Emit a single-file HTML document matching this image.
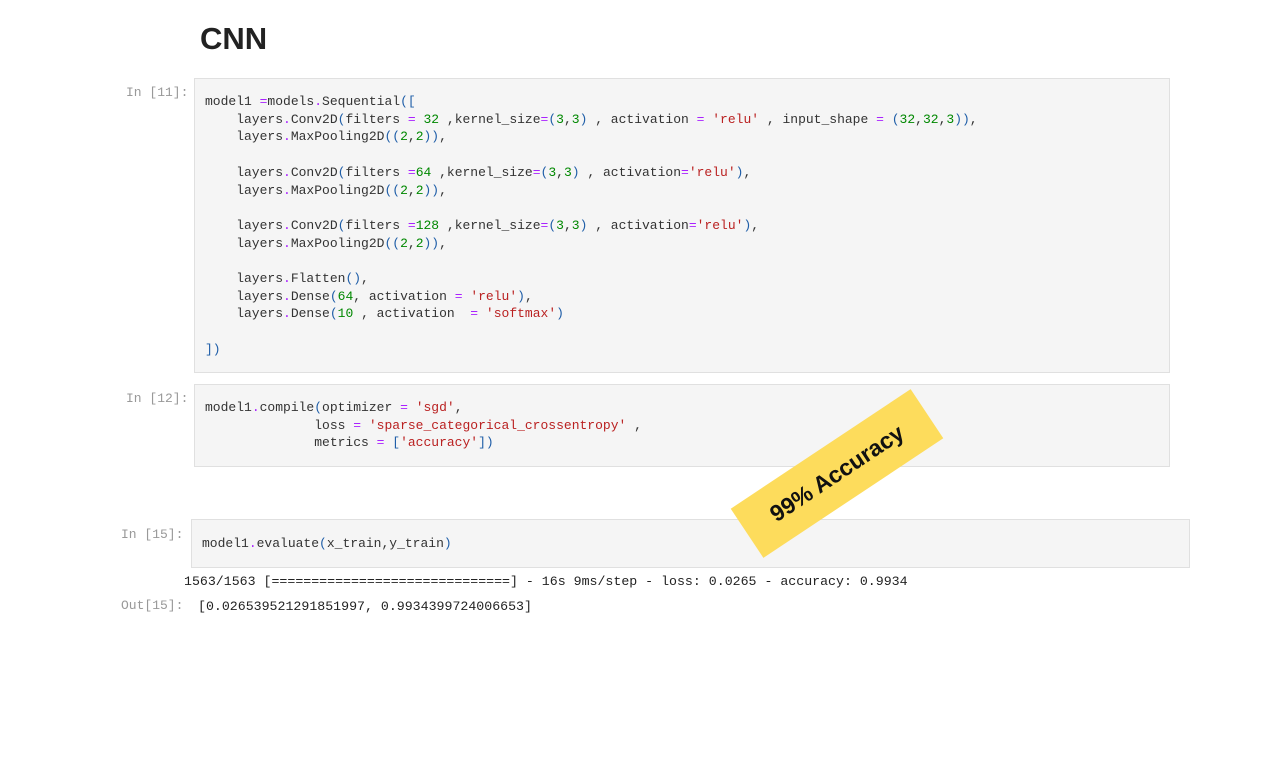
<!DOCTYPE html>
<html><head><meta charset="utf-8"><style>
body{margin:0;width:1280px;height:769px;background:#fff;position:relative;overflow:hidden;font-family:"Liberation Sans",sans-serif}
.t{position:absolute;left:200px;top:21px;font-size:31px;font-weight:bold;color:#222}
.p{position:absolute;font-family:"Liberation Mono",monospace;font-size:13px;color:#999;white-space:pre}
.c{position:absolute;background:#f5f5f5;border:1px solid #e0e0e0;box-sizing:border-box}
pre{position:absolute;margin:0;font-family:"Liberation Mono",monospace;font-size:13px;line-height:17.7px;color:#333;white-space:pre}
.o{color:#aa22ff}.n{color:#008800}.s{color:#ba2121}.b{color:#1f5ea8}
.st{position:absolute;left:729px;top:444px;width:216px;height:59px;background:#fddc5c;transform:rotate(-33.6deg);display:flex;align-items:center;justify-content:center;font-weight:bold;font-size:23px;color:#111}
</style></head><body>
<div class="t">CNN</div>
<div class="p" style="left:126px;top:85px">In [11]:</div>
<div class="c" style="left:194px;top:78px;width:976px;height:295px"></div>
<pre style="left:205px;top:93px">model1 <span class="o">=</span>models<span class="o">.</span>Sequential<span class="b">([</span>
    layers<span class="o">.</span>Conv2D<span class="b">(</span>filters <span class="o">=</span> <span class="n">32</span> ,kernel_size<span class="o">=</span><span class="b">(</span><span class="n">3</span>,<span class="n">3</span><span class="b">)</span> , activation <span class="o">=</span> <span class="s">'relu'</span> , input_shape <span class="o">=</span> <span class="b">(</span><span class="n">32</span>,<span class="n">32</span>,<span class="n">3</span><span class="b">))</span>,
    layers<span class="o">.</span>MaxPooling2D<span class="b">((</span><span class="n">2</span>,<span class="n">2</span><span class="b">))</span>,

    layers<span class="o">.</span>Conv2D<span class="b">(</span>filters <span class="o">=</span><span class="n">64</span> ,kernel_size<span class="o">=</span><span class="b">(</span><span class="n">3</span>,<span class="n">3</span><span class="b">)</span> , activation<span class="o">=</span><span class="s">'relu'</span><span class="b">)</span>,
    layers<span class="o">.</span>MaxPooling2D<span class="b">((</span><span class="n">2</span>,<span class="n">2</span><span class="b">))</span>,

    layers<span class="o">.</span>Conv2D<span class="b">(</span>filters <span class="o">=</span><span class="n">128</span> ,kernel_size<span class="o">=</span><span class="b">(</span><span class="n">3</span>,<span class="n">3</span><span class="b">)</span> , activation<span class="o">=</span><span class="s">'relu'</span><span class="b">)</span>,
    layers<span class="o">.</span>MaxPooling2D<span class="b">((</span><span class="n">2</span>,<span class="n">2</span><span class="b">))</span>,

    layers<span class="o">.</span>Flatten<span class="b">()</span>,
    layers<span class="o">.</span>Dense<span class="b">(</span><span class="n">64</span>, activation <span class="o">=</span> <span class="s">'relu'</span><span class="b">)</span>,
    layers<span class="o">.</span>Dense<span class="b">(</span><span class="n">10</span> , activation  <span class="o">=</span> <span class="s">'softmax'</span><span class="b">)</span>

<span class="b">])</span></pre>
<div class="p" style="left:126px;top:391px">In [12]:</div>
<div class="c" style="left:194px;top:384px;width:976px;height:83px"></div>
<pre style="left:205px;top:399px">model1<span class="o">.</span>compile<span class="b">(</span>optimizer <span class="o">=</span> <span class="s">'sgd'</span>,
              loss <span class="o">=</span> <span class="s">'sparse_categorical_crossentropy'</span> ,
              metrics <span class="o">=</span> <span class="b">[</span><span class="s">'accuracy'</span><span class="b">])</span></pre>
<div class="p" style="left:121px;top:527px">In [15]:</div>
<div class="c" style="left:191px;top:519px;width:999px;height:49px"></div>
<pre style="left:202px;top:535px">model1<span class="o">.</span>evaluate<span class="b">(</span>x_train,y_train<span class="b">)</span></pre>
<pre style="left:184px;top:573px;color:#222;font-size:13.25px">1563/1563 [==============================] - 16s 9ms/step - loss: 0.0265 - accuracy: 0.9934</pre>
<div class="p" style="left:121px;top:598px">Out[15]:</div>
<pre style="left:198px;top:598px;color:#222;font-size:13.25px">[0.026539521291851997, 0.9934399724006653]</pre>
<div class="st">99% Accuracy</div>
</body></html>
